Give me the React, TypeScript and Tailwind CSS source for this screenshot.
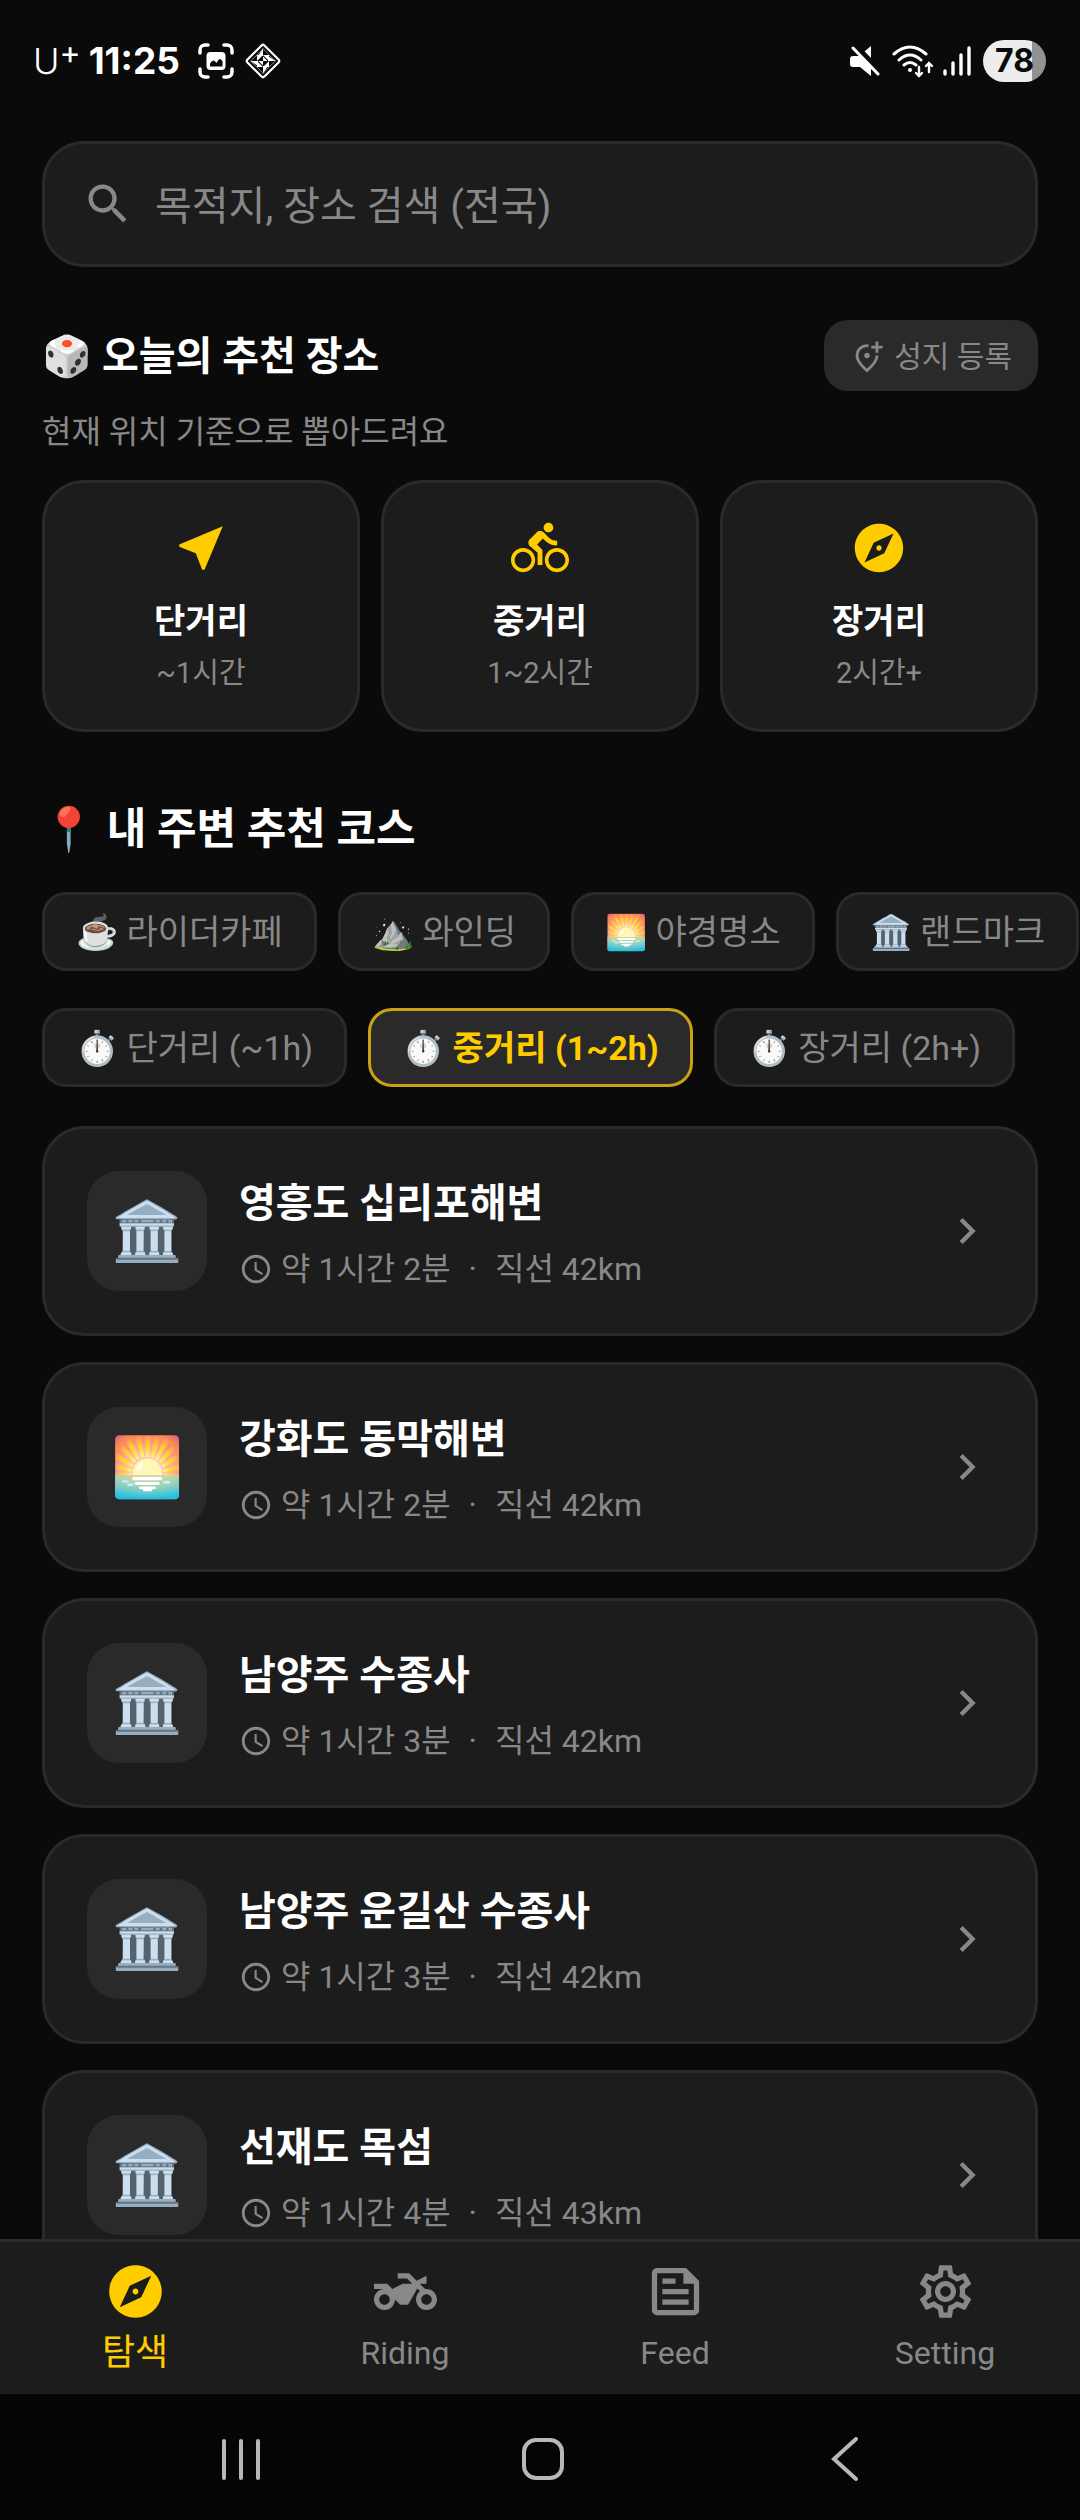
import { useState } from "react";
import {
  MdAccessTime,
  MdChevronRight,
  MdDirectionsBike,
  MdExplore,
  MdNearMe,
  MdOutlineAddLocationAlt,
  MdOutlineFeed,
  MdOutlineSettings,
  MdSearch,
  MdTwoWheeler,
} from "react-icons/md";

const distances = [
  { title: "단거리", desc: "~1시간", icon: MdNearMe },
  { title: "중거리", desc: "1~2시간", icon: MdDirectionsBike },
  { title: "장거리", desc: "2시간+", icon: MdExplore },
];

const categories = ["☕ 라이더카페", "⛰️ 와인딩", "🌅 야경명소", "🏛️ 랜드마크"];

const ranges = ["⏱️ 단거리 (~1h)", "⏱️ 중거리 (1~2h)", "⏱️ 장거리 (2h+)"];

const places = [
  { emoji: "🏛️", name: "영흥도 십리포해변", time: "약 1시간 2분", km: "42km" },
  { emoji: "🌅", name: "강화도 동막해변", time: "약 1시간 2분", km: "42km" },
  { emoji: "🏛️", name: "남양주 수종사", time: "약 1시간 3분", km: "42km" },
  { emoji: "🏛️", name: "남양주 운길산 수종사", time: "약 1시간 3분", km: "42km" },
  { emoji: "🏛️", name: "선재도 목섬", time: "약 1시간 4분", km: "43km" },
];

const tabs = [
  { label: "탐색", icon: MdExplore },
  { label: "Riding", icon: MdTwoWheeler },
  { label: "Feed", icon: MdOutlineFeed },
  { label: "Setting", icon: MdOutlineSettings },
];

const StatusBar = () => {
  return (
    <header className="flex h-[122px] shrink-0 items-center justify-between pr-[34px] pl-[33px] font-['Inter',sans-serif] text-white">
      <div className="flex items-center">
        <div className="flex items-start text-[36px] leading-[40px] font-light">
          U<span className="text-[32px] leading-[24px] font-normal">+</span>
        </div>
        <span className="ml-2 text-[37px] leading-[40px] font-bold">11:25</span>
        <svg className="ml-[18px] size-9" viewBox="0 0 36 36" fill="none">
          <path
            d="M2 10V7a5 5 0 0 1 5-5h3M26 2h3a5 5 0 0 1 5 5v3M34 26v3a5 5 0 0 1-5 5h-3M10 34H7a5 5 0 0 1-5-5v-3"
            stroke="currentColor"
            strokeWidth="3.5"
            strokeLinecap="round"
          />
          <rect x="8.5" y="9" width="19" height="18" rx="4" fill="currentColor" />
          <path
            d="M12 23.5v-3q2-3 3.5-3t3 2.5q2-4 3.500-4t2.500 2.500v5z"
            fill="#0a0a0a"
          />
        </svg>
        <svg className="ml-[10px] size-[38px]" viewBox="0 0 38 38" fill="none">
          <rect
            x="7"
            y="7"
            width="24"
            height="24"
            rx="2"
            transform="rotate(45 19 19)"
            stroke="currentColor"
            strokeWidth="2.200"
          />
          <path
            d="M19 6.500v7.500h-5zM31.500 19h-7.500v-5zM19 31.500v-7.500h5zM6.500 19h7.500v5zM13 13h6l-6 6zM25 13v6l-6-6zM25 25h-6l6-6zM13 25v-6l6 6z"
            fill="currentColor"
          />
          <path d="M19 19v-4.500l4.500 4.500zM19 19v4.500l-4.500-4.500z" fill="currentColor" />
          <path
            d="M19 6.500l6 6.500 6.500 6-6.500 6-6 6.500-6-6.500-6.500-6 6.500-6z"
            stroke="currentColor"
            strokeWidth="0.500"
          />
        </svg>
      </div>
      <div className="flex items-center">
        <svg className="h-8 w-[30px]" viewBox="0 0 30 32">
          <path
            d="M3 11h6L21 1v30L10 22H3q-3 0-3-3v-5q0-3 3-3z"
            fill="currentColor"
          />
          <path d="M4 -1l28 29" stroke="#0a0a0a" strokeWidth="5" />
          <path
            d="M3 3l25 26"
            stroke="currentColor"
            strokeWidth="3"
            strokeLinecap="round"
          />
        </svg>
        <svg
          className="ml-3 h-[34px] w-[42px]"
          viewBox="0 0 42 34"
          fill="none"
          stroke="currentColor"
          strokeWidth="3"
          strokeLinecap="round"
        >
          <path d="M2 10q16-14 32 0M7 16q11-10 22 0M12 21q6-5 12 0" />
          <circle cx="18" cy="26" r="1" fill="currentColor" strokeWidth="2" />
          <path d="M27 23v9M24 29l3 3 3-3M37 28v-9M34 22l3-3 3 3" strokeWidth="2.4" />
        </svg>
        <svg
          className="ml-[9px] h-[34px] w-7"
          viewBox="0 0 28 34"
          stroke="currentColor"
          strokeWidth="3.4"
          strokeLinecap="round"
        >
          <path d="M2 27v3M10 19v11M18 11v19M26 4v26" />
        </svg>
        <div className="ml-3 flex h-[42px] w-[63px] items-center justify-center rounded-full bg-linear-to-r from-[#ededed] from-78% to-[#929292] to-78% text-[32px] leading-none font-bold text-[#0a0a0a]">
          78
        </div>
      </div>
    </header>
  );
};

const Chip = ({ label, active, onClick }: any) => {
  return (
    <button
      type="button"
      aria-pressed={active}
      onClick={onClick}
      className={`h-[79px] shrink-0 rounded-3xl border-[3px] px-[31px] text-[34px] leading-[50px] whitespace-nowrap ${
        active
          ? "border-[#c9a316] bg-[#2a2a2a] font-bold text-[#ffcc00]"
          : "border-[#2a2a2a] bg-[#1c1c1c] text-[#888888]"
      }`}
    >
      {label}
    </button>
  );
};

const App = () => {
  const [category, setCategory] = useState("");
  const [range, setRange] = useState(ranges[1]);
  const [tab, setTab] = useState("탐색");

  return (
    <div
      lang="ko"
      className="flex h-screen flex-col bg-[#0a0a0a] font-['Roboto','Noto_Sans_CJK_KR',sans-serif] text-white"
    >
      <StatusBar />

      <main className="min-h-0 flex-1 overflow-y-auto pt-[19px] [scrollbar-width:none]">
        <div className="px-[42px]">
          <label className="flex h-[126px] items-center gap-[21px] rounded-[42px] border-[3px] border-[#2a2a2a] bg-[#1c1c1c] px-[37px]">
            <MdSearch className="size-[52px] shrink-0 text-[#888888]" />
            <input
              type="text"
              aria-label="장소 검색"
              placeholder="목적지, 장소 검색 (전국)"
              className="h-16 min-w-0 flex-1 bg-transparent pt-1 text-[40px] outline-none placeholder:text-[#888888]"
            />
          </label>

          <div className="mt-[53px] flex items-center justify-between">
            <h2 className="pt-0.5 text-[40px] leading-[60px] font-bold">
              🎲 오늘의 추천 장소
            </h2>
            <button
              type="button"
              className="flex h-[71px] items-center gap-[10px] rounded-3xl bg-[#2a2a2a] px-[26px] pt-0.5 text-[30px] leading-[40px] text-[#888888]"
            >
              <MdOutlineAddLocationAlt className="size-[34px]" />
              성지 등록
            </button>
          </div>
          <p className="mt-[21px] text-[32px] leading-[40px] text-[#888888]">
            현재 위치 기준으로 뽑아드려요
          </p>

          <div className="mt-7 grid grid-cols-3 gap-[21px]">
            {distances.map((item) => (
              <button
                type="button"
                key={item.title}
                className="flex flex-col items-center rounded-[42px] border-[3px] border-[#2a2a2a] bg-[#1c1c1c] py-9"
              >
                <item.icon className="size-[58px] text-[#ffcc00]" />
                <span className="mt-5 text-[34px] leading-[48px] font-bold">
                  {item.title}
                </span>
                <span className="mt-2 text-[29px] leading-[40px] text-[#888888]">
                  {item.desc}
                </span>
              </button>
            ))}
          </div>

          <h2 className="mt-[69px] text-[43px] leading-[56px] font-bold">
            📍 내 주변 추천 코스
          </h2>
        </div>

        <div className="mt-[35px] flex gap-[21px] overflow-x-auto pl-[42px] [scrollbar-width:none]">
          {categories.map((item) => (
            <Chip
              key={item}
              label={item}
              active={category === item}
              onClick={() => setCategory(item)}
            />
          ))}
        </div>
        <div className="mt-[37px] flex gap-[21px] overflow-x-auto pl-[42px] [scrollbar-width:none]">
          {ranges.map((item) => (
            <Chip
              key={item}
              label={item}
              active={range === item}
              onClick={() => setRange(item)}
            />
          ))}
        </div>

        <ul className="mt-[39px] flex flex-col gap-[26px] px-[42px] pb-[42px]">
          {places.map((place) => (
            <li key={place.name}>
              <a
                href="#"
                className="flex h-[210px] items-center rounded-[42px] border-[3px] border-[#2a2a2a] bg-[#1c1c1c] px-[42px]"
              >
                <div className="flex size-[120px] shrink-0 items-center justify-center rounded-[32px] bg-[#2a2a2a] text-[58px] leading-[72px]">
                  {place.emoji}
                </div>
                <div className="ml-8 min-w-0 flex-1 pt-1">
                  <h3 className="text-[40px] leading-[60px] font-bold">
                    {place.name}
                  </h3>
                  <p className="mt-3 flex items-center text-[32px] leading-[46px] text-[#888888]">
                    <MdAccessTime className="mr-2 size-[34px]" />
                    <span>{place.time}</span>
                    <span className="mx-[18px]">·</span>
                    <span>직선 {place.km}</span>
                  </p>
                </div>
                <MdChevronRight className="size-[52px] shrink-0 text-[#888888]" />
              </a>
            </li>
          ))}
        </ul>
      </main>

      <nav className="grid h-[155px] shrink-0 grid-cols-4 border-t-[3px] border-[#2a2a2a] bg-[#1c1c1c]">
        {tabs.map((item) => (
          <a
            href="#"
            key={item.label}
            onClick={() => setTab(item.label)}
            className={`flex flex-col items-center pt-[18px] leading-[48px] ${
              tab === item.label
                ? "text-[36px] text-[#ffcc00]"
                : "text-[32px] text-[#888888]"
            }`}
          >
            <item.icon className="size-[63px]" />
            <span className="mt-1.5">{item.label}</span>
          </a>
        ))}
      </nav>

      <footer className="grid h-[126px] shrink-0 grid-cols-3 items-center justify-items-center bg-[#050505] pt-1 pr-[84px] pl-[90px] text-[#b8b8b8]">
        <button type="button" aria-label="Recents" className="flex gap-[13px]">
          <span className="h-[41px] w-1 rounded-full bg-current" />
          <span className="h-[41px] w-1 rounded-full bg-current" />
          <span className="h-[41px] w-1 rounded-full bg-current" />
        </button>
        <button
          type="button"
          aria-label="Home"
          className="size-[42px] rounded-[14px] border-4 border-current"
        />
        <button type="button" aria-label="Back">
          <svg className="h-[44px] w-7" viewBox="0 0 28 44" fill="none">
            <path
              d="M25 2L3 22l22 20"
              stroke="currentColor"
              strokeWidth="4"
              strokeLinecap="round"
            />
          </svg>
        </button>
      </footer>
    </div>
  );
};

export default App;
